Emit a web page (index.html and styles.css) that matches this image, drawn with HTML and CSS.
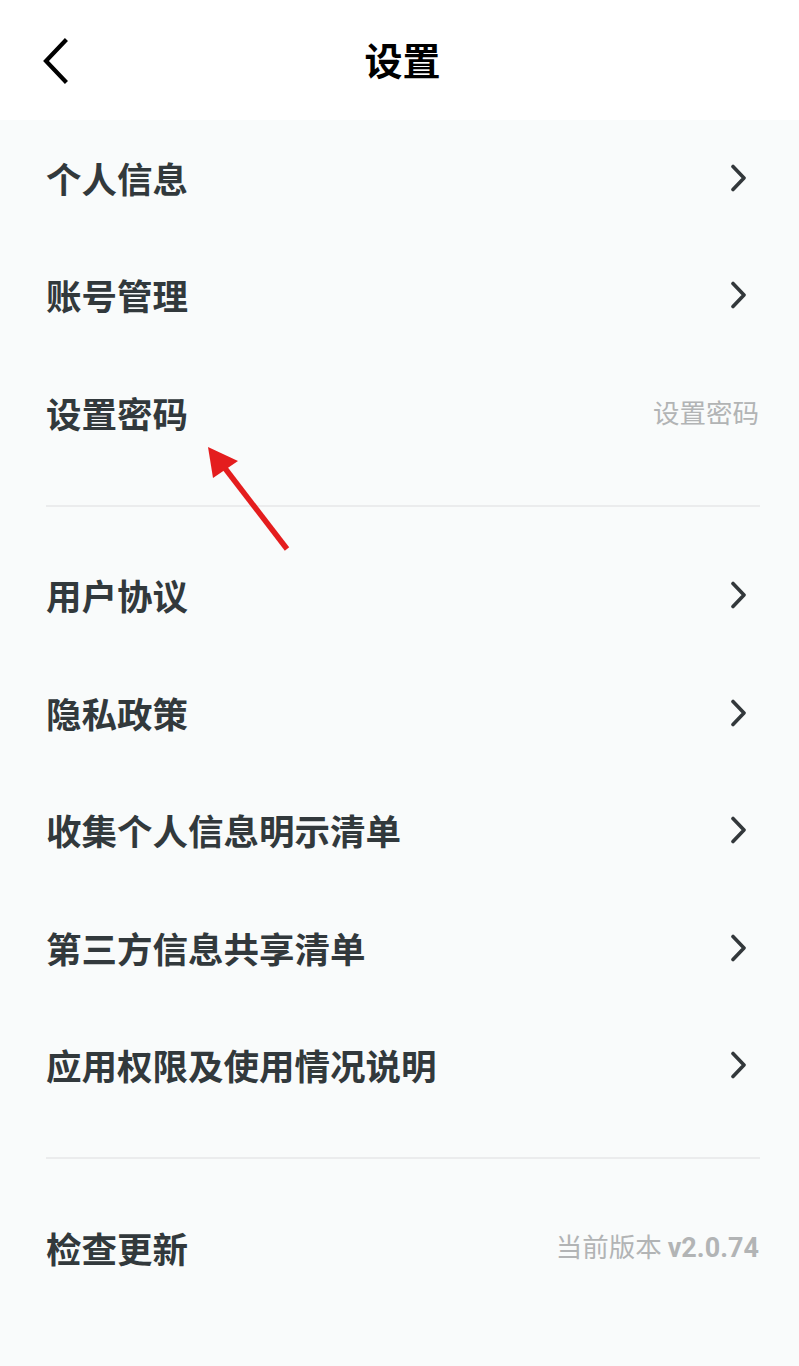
FILE: index.html
```html
<!DOCTYPE html>
<html lang="zh-CN">
<head>
<meta charset="utf-8">
<title>设置</title>
<link rel="stylesheet" href="styles.css">
</head>
<body>
<div class="page">
  <header class="topbar">
    <div class="back">
      <svg width="30" height="46" viewBox="0 0 30 46"><path d="M25 3 L6 23 L25 43" fill="none" stroke="#000" stroke-width="4.2" stroke-linecap="square" stroke-linejoin="miter"/></svg>
    </div>
    <h1 class="title">设置</h1>
    <div class="spacer"></div>
  </header>
  <main class="list">
    <div class="row"><span class="label">个人信息</span><span class="chev"><svg width="18" height="28" viewBox="0 0 18 28"><path d="M3 2.5 L14 14 L3 25.5" fill="none" stroke="#33383b" stroke-width="3.6" stroke-linecap="round" stroke-linejoin="round"/></svg></span></div>
    <div class="row"><span class="label">账号管理</span><span class="chev"><svg width="18" height="28" viewBox="0 0 18 28"><path d="M3 2.5 L14 14 L3 25.5" fill="none" stroke="#33383b" stroke-width="3.6" stroke-linecap="round" stroke-linejoin="round"/></svg></span></div>
    <div class="row"><span class="label">设置密码</span><span class="value">设置密码</span></div>
    <div class="divider"></div>
    <div class="row"><span class="label">用户协议</span><span class="chev"><svg width="18" height="28" viewBox="0 0 18 28"><path d="M3 2.5 L14 14 L3 25.5" fill="none" stroke="#33383b" stroke-width="3.6" stroke-linecap="round" stroke-linejoin="round"/></svg></span></div>
    <div class="row"><span class="label">隐私政策</span><span class="chev"><svg width="18" height="28" viewBox="0 0 18 28"><path d="M3 2.5 L14 14 L3 25.5" fill="none" stroke="#33383b" stroke-width="3.6" stroke-linecap="round" stroke-linejoin="round"/></svg></span></div>
    <div class="row"><span class="label">收集个人信息明示清单</span><span class="chev"><svg width="18" height="28" viewBox="0 0 18 28"><path d="M3 2.5 L14 14 L3 25.5" fill="none" stroke="#33383b" stroke-width="3.6" stroke-linecap="round" stroke-linejoin="round"/></svg></span></div>
    <div class="row"><span class="label">第三方信息共享清单</span><span class="chev"><svg width="18" height="28" viewBox="0 0 18 28"><path d="M3 2.5 L14 14 L3 25.5" fill="none" stroke="#33383b" stroke-width="3.6" stroke-linecap="round" stroke-linejoin="round"/></svg></span></div>
    <div class="row"><span class="label">应用权限及使用情况说明</span><span class="chev"><svg width="18" height="28" viewBox="0 0 18 28"><path d="M3 2.5 L14 14 L3 25.5" fill="none" stroke="#33383b" stroke-width="3.6" stroke-linecap="round" stroke-linejoin="round"/></svg></span></div>
    <div class="divider"></div>
    <div class="row"><span class="label">检查更新</span><span class="value">当前版本 <b class="ver">v2.0.74</b></span></div>
  </main>
  <svg class="annot" width="799" height="1366" viewBox="0 0 799 1366">
    <line x1="287" y1="549" x2="224" y2="467" stroke="#e41d1e" stroke-width="5.5" stroke-linecap="butt"/>
    <polygon points="208,447 238,461 213,478" fill="#e41d1e"/>
  </svg>
</div>
</body>
</html>
```

FILE: styles.css
```css
html, body {
  margin: 0;
  padding: 0;
}
body {
  width: 799px;
  height: 1366px;
  background: #f9fbfb;
  font-family: "Noto Sans CJK SC", "Noto Sans", sans-serif;
  overflow: hidden;
}
.page {
  position: relative;
  width: 799px;
  height: 1366px;
}
.topbar {
  height: 120px;
  background: #ffffff;
  display: flex;
  align-items: center;
  padding: 0 0 0 40px;
  box-sizing: border-box;
}
.back {
  width: 30px;
  height: 46px;
  display: flex;
  margin-top: 2px;
}
.title {
  flex: 1;
  margin: -3px 0 0 0;
  text-align: center;
  font-size: 38px;
  font-weight: 700;
  color: #000;
  padding-left: 6px;
  padding-right: 70px;
  line-height: 1;
}
.spacer {
  width: 0;
}
.list {
  padding: 0 39px 0 46px;
}
.row {
  height: 117.5px;
  box-sizing: border-box;
  padding-bottom: 3px;
  display: flex;
  align-items: center;
  justify-content: space-between;
}
.label {
  font-size: 35.5px;
  font-weight: 700;
  color: #32393c;
  letter-spacing: 0;
  line-height: 1;
}
.chev {
  display: flex;
  margin-right: 12px;
  margin-top: 1px;
}
.value {
  font-size: 26.5px;
  color: #b2b4b5;
  line-height: 1;
  margin-right: 1px;
}
.ver {
  font-family: "Roboto", "Noto Sans", sans-serif;
  font-weight: 700;
  font-size: 27px;
}
.divider {
  height: 2px;
  background: #ebeced;
  margin: 32px 0 31px 0;
}
.annot {
  position: absolute;
  left: 0;
  top: 0;
  pointer-events: none;
}
```
